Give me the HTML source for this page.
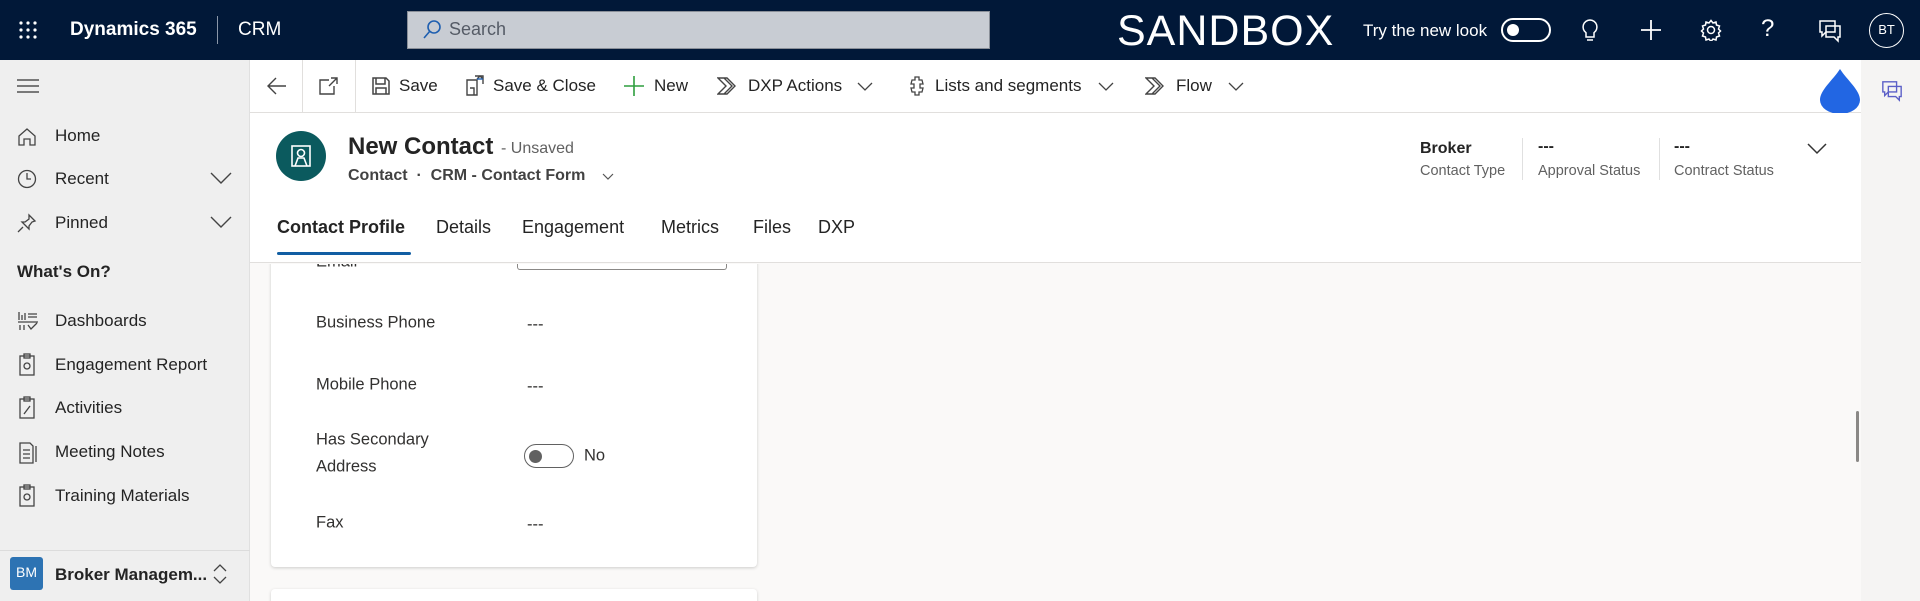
<!DOCTYPE html>
<html><head><meta charset="utf-8"><style>
*{margin:0;padding:0;box-sizing:border-box}
body{width:1920px;height:601px;overflow:hidden;font-family:"Liberation Sans",sans-serif;background:#faf9f8;position:relative;color:#242424}
.a{position:absolute;white-space:nowrap}
.top{position:absolute;left:0;top:0;width:1920px;height:60px;background:#011838;color:#fff}
.side{position:absolute;left:0;top:60px;width:250px;height:541px;background:#efefef;border-right:1px solid #e0e0e0}
.side .it{position:absolute;left:55px;font-size:17px;color:#242424;transform:translateY(-50%)}
.side svg{position:absolute;left:17px}
.cmd{position:absolute;left:250px;top:60px;width:1611px;height:53px;background:#fff;border-bottom:1px solid #e1dfdd}
.cmd .t{position:absolute;top:50%;transform:translateY(-50%);font-size:17px;color:#242424}
.hdr{position:absolute;left:250px;top:113px;width:1611px;height:150px;background:#fff;border-bottom:1px solid #e1dfdd}
.card{position:absolute;left:271px;top:230px;width:486px;height:337px;background:#fff;border-radius:4px;box-shadow:0 1px 3px rgba(0,0,0,.18)}
.lbl{position:absolute;font-size:16.5px;color:#323130;transform:translateY(-50%)}
.val{position:absolute;font-size:16.5px;color:#323130;transform:translateY(-50%)}
</style></head><body>
<div class="top">
 <svg class="a" style="left:19px;top:21px" width="18" height="18" viewBox="0 0 18 18" fill="#fff"><circle cx="2" cy="2" r="1.6"/><circle cx="9" cy="2" r="1.6"/><circle cx="16" cy="2" r="1.6"/><circle cx="2" cy="9" r="1.6"/><circle cx="9" cy="9" r="1.6"/><circle cx="16" cy="9" r="1.6"/><circle cx="2" cy="16" r="1.6"/><circle cx="9" cy="16" r="1.6"/><circle cx="16" cy="16" r="1.6"/></svg>
 <div class="a" style="left:70px;top:19px;font-size:19px;font-weight:bold">Dynamics 365</div>
 <div class="a" style="left:217px;top:16px;width:1px;height:28px;background:#8a96a8"></div>
 <div class="a" style="left:238px;top:19px;font-size:19px">CRM</div>
 <div class="a" style="left:407px;top:11px;width:583px;height:38px;background:#c8ccd3;border:1px solid #8a8f98"></div>
 <svg class="a" style="left:421px;top:19px" width="22" height="22" viewBox="0 0 22 22" fill="none" stroke="#1f5fb0" stroke-width="1.6"><circle cx="13" cy="8" r="6"/><path d="M9 12 3 19"/></svg>
 <div class="a" style="left:449px;top:19px;font-size:18px;color:#555b66">Search</div>
 <div class="a" style="left:1117px;top:7px;font-size:43px;font-weight:300;letter-spacing:1px">SANDBOX</div>
 <div class="a" style="left:1363px;top:21px;font-size:17px">Try the new look</div>
 <div class="a" style="left:1501px;top:18px;width:50px;height:24px;border:2px solid #fff;border-radius:12px"><div style="position:absolute;left:4px;top:4px;width:12px;height:12px;border-radius:50%;background:#fff"></div></div>
 <svg class="a" style="left:1579px;top:18px" width="22" height="26" viewBox="0 0 22 26" fill="none" stroke="#fff" stroke-width="1.5"><path d="M11 2a7 7 0 0 0-4 12.7V19h8v-4.3A7 7 0 0 0 11 2zM8 22h6"/></svg>
 <svg class="a" style="left:1640px;top:19px" width="22" height="22" viewBox="0 0 22 22" stroke="#fff" stroke-width="1.8"><path d="M11 1v20M1 11h20"/></svg>
 <svg class="a" style="left:1700px;top:19px" width="22" height="22" viewBox="0 0 22 22" fill="none" stroke="#fff" stroke-width="1.5"><circle cx="11" cy="11" r="3.5"/><path d="M11 1.5l2 2.5 3-1 .5 3 3 1-1 3 2 2-2 2 1 3-3 1-.5 3-3-1-2 2.5-2-2.5-3 1-.5-3-3-1 1-3-2-2 2-2-1-3 3-1 .5-3 3 1z"/></svg>
 <div class="a" style="left:1761px;top:15px;font-size:24px;font-weight:300">?</div>
 <svg class="a" style="left:1818px;top:19px" width="24" height="24" viewBox="0 0 24 24" fill="none" stroke="#fff" stroke-width="1.5"><path d="M2 2h15v11H8l-4 4v-4H2z"/><path d="M8 7h14v11h-2v4l-4-4H8z"/></svg>
 <div class="a" style="left:1869px;top:13px;width:35px;height:35px;border:1.5px solid #fff;border-radius:50%;font-size:13px;text-align:center;line-height:32px">BT</div>
</div>
<div class="side">
 <svg style="top:19px" width="22" height="14" viewBox="0 0 22 14" stroke="#333" stroke-width="1.3"><path d="M0 1h22M0 7h22M0 13h22"/></svg>
 <svg style="top:67px" width="20" height="20" viewBox="0 0 20 20" fill="none" stroke="#444" stroke-width="1.3"><path d="M2 9 10 2l8 7v9h-5v-6H7v6H2z"/></svg><div class="it" style="top:76px">Home</div>
 <svg style="top:109px" width="20" height="20" viewBox="0 0 20 20" fill="none" stroke="#444" stroke-width="1.3"><circle cx="10" cy="10" r="8.5"/><path d="M10 4v6h4"/></svg><div class="it" style="top:119px">Recent</div>
 <svg class="x" style="left:210px;top:112px" width="22" height="12" viewBox="0 0 22 12" fill="none" stroke="#444" stroke-width="1.4"><path d="M1 1l10 10L21 1"/></svg>
 <svg style="top:153px" width="20" height="20" viewBox="0 0 20 20" fill="none" stroke="#444" stroke-width="1.3"><path d="M12 2l6 6-3 1-3 4 0 3-7-7h3l4-3zM6 14l-5 5"/></svg><div class="it" style="top:163px">Pinned</div>
 <svg style="left:210px;top:156px" width="22" height="12" viewBox="0 0 22 12" fill="none" stroke="#444" stroke-width="1.4"><path d="M1 1l10 10L21 1"/></svg>
 <div class="it" style="left:17px;top:212px;font-weight:bold">What's On?</div>
 <svg style="top:251px" width="22" height="20" viewBox="0 0 22 20" fill="none" stroke="#444" stroke-width="1.3"><path d="M2 1v8M5 4v5M8 2v7M11 3h9M11 6h9M1 11h20M3 14v5M7 14v5M11 14l3 4 6-6"/></svg><div class="it" style="top:261px">Dashboards</div>
 <svg style="top:293px" width="20" height="24" viewBox="0 0 20 24" fill="none" stroke="#444" stroke-width="1.3"><rect x="3" y="3" width="14" height="19"/><rect x="7" y="1" width="6" height="4"/><circle cx="10" cy="13" r="3"/></svg><div class="it" style="top:305px">Engagement Report</div>
 <svg style="top:336px" width="20" height="24" viewBox="0 0 20 24" fill="none" stroke="#444" stroke-width="1.3"><rect x="3" y="3" width="14" height="19"/><rect x="7" y="1" width="6" height="4"/><path d="M7 18l6-8"/></svg><div class="it" style="top:348px">Activities</div>
 <svg style="top:380px" width="22" height="24" viewBox="0 0 22 24" fill="none" stroke="#444" stroke-width="1.3"><path d="M3 3h10l3 3v17H3zM6 10h7M6 14h7M6 18h7M19 6v16"/></svg><div class="it" style="top:392px">Meeting Notes</div>
 <svg style="top:424px" width="20" height="24" viewBox="0 0 20 24" fill="none" stroke="#444" stroke-width="1.3"><rect x="3" y="3" width="14" height="19"/><rect x="7" y="1" width="6" height="4"/><circle cx="10" cy="13" r="3"/></svg><div class="it" style="top:436px">Training Materials</div>
 <div style="position:absolute;left:0;top:490px;width:250px;height:1px;background:#dcdcdc"></div>
 <div style="position:absolute;left:10px;top:497px;width:33px;height:33px;background:#2d73b3;border-radius:3px;color:#fff;font-size:14px;text-align:center;line-height:31px">BM</div>
 <div class="it" style="top:515px;font-weight:bold">Broker Managem...</div>
 <svg style="left:212px;top:503px" width="16" height="22" viewBox="0 0 16 22" fill="none" stroke="#444" stroke-width="1.3"><path d="M2 8l6-6 6 6M2 14l6 6 6-6"/></svg>
</div>
<div class="cmd">
 <div class="a" style="left:52px;top:0;width:1px;height:53px;background:#e1dfdd"></div>
 <div class="a" style="left:105px;top:0;width:1px;height:53px;background:#e1dfdd"></div>
 <svg class="a" style="left:17px;top:17px" width="20" height="18" viewBox="0 0 20 18" fill="none" stroke="#444" stroke-width="1.4"><path d="M19 9H2M9 1 1 9l8 8"/></svg>
 <svg class="a" style="left:69px;top:17px" width="20" height="18" viewBox="0 0 20 18" fill="none" stroke="#444" stroke-width="1.4"><path d="M10 3H1v14h14V9M12 1h6v6M18 1l-8 8"/></svg>
 <svg class="a" style="left:122px;top:17px" width="18" height="18" viewBox="0 0 18 18" fill="none" stroke="#444" stroke-width="1.5"><path d="M1 1h13l3 3v13H1zM4 1v6h9V1M4 17v-6h10v6"/></svg>
 <div class="t" style="left:149px">Save</div>
 <svg class="a" style="left:215px;top:14px" width="20" height="22" viewBox="0 0 20 22" fill="none" stroke="#444" stroke-width="1.4"><path d="M2 6h10v15H2zM5 14h4v7M10 2h8v8M12 5l3-3 3 3" /><path d="M12 5h6" stroke="#1f5fb0"/></svg>
 <div class="t" style="left:243px">Save &amp; Close</div>
 <svg class="a" style="left:374px;top:16px" width="20" height="20" viewBox="0 0 20 20" stroke="#2e9e3e" stroke-width="1.6"><path d="M10 0v20M0 10h20"/></svg>
 <div class="t" style="left:404px">New</div>
 <svg class="a" style="left:467px;top:17px" width="22" height="18" viewBox="0 0 22 18" fill="none" stroke="#444" stroke-width="1.4"><path d="M1 1h9l8 8-8 8H1l8-8zM7 1l8 8-8 8"/></svg>
 <div class="t" style="left:498px">DXP Actions</div>
 <svg class="a" style="left:607px;top:22px" width="16" height="9" viewBox="0 0 16 9" fill="none" stroke="#444" stroke-width="1.3"><path d="M1 1l7 7 7-7"/></svg>
 <svg class="a" style="left:658px;top:16px" width="18" height="20" viewBox="0 0 18 20" fill="none" stroke="#444" stroke-width="1.3"><path d="M7 1h4v3h3l1 4h-3v4h3l-1 4h-3v3H7v-3H4l-1-4h3V8H3l1-4h3z"/></svg>
 <div class="t" style="left:685px">Lists and segments</div>
 <svg class="a" style="left:848px;top:22px" width="16" height="9" viewBox="0 0 16 9" fill="none" stroke="#444" stroke-width="1.3"><path d="M1 1l7 7 7-7"/></svg>
 <svg class="a" style="left:895px;top:17px" width="22" height="18" viewBox="0 0 22 18" fill="none" stroke="#444" stroke-width="1.4"><path d="M1 1h9l8 8-8 8H1l8-8zM7 1l8 8-8 8"/></svg>
 <div class="t" style="left:926px">Flow</div>
 <svg class="a" style="left:978px;top:22px" width="16" height="9" viewBox="0 0 16 9" fill="none" stroke="#444" stroke-width="1.3"><path d="M1 1l7 7 7-7"/></svg>
</div>
<svg class="a" style="left:1819px;top:68px" width="42" height="46" viewBox="0 0 42 46"><path d="M21 1C14 12 1 22 1 32a20 14 0 0 0 40 0C41 22 28 12 21 1z" fill="#2266e3"/></svg>
<div class="a" style="left:1861px;top:60px;width:59px;height:541px;background:#f5f4f3"></div>
<svg class="a" style="left:1881px;top:80px" width="22" height="22" viewBox="0 0 24 24" fill="none" stroke="#5b5fc7" stroke-width="1.5"><path d="M2 2h15v11H8l-4 4v-4H2z"/><path d="M8 7h14v11h-2v4l-4-4H8z"/></svg>
<div class="hdr">
 <div class="a" style="left:26px;top:18px;width:50px;height:50px;border-radius:50%;background:#0b5a5e"></div>
 <svg class="a" style="left:41px;top:32px" width="20" height="22" viewBox="0 0 20 22" fill="none" stroke="#fff" stroke-width="1.6"><rect x="1" y="1" width="18" height="20"/><circle cx="10" cy="8" r="3.5"/><path d="M4 21l3-8h6l3 8"/></svg>
 <div class="a" style="left:98px;top:20px;font-size:24px;font-weight:bold">New Contact</div>
 <div class="a" style="left:251px;top:27px;font-size:16px;color:#616161">- Unsaved</div>
 <div class="a" style="left:98px;top:54px;font-size:16px;font-weight:bold;color:#424242">Contact &nbsp;·&nbsp; CRM - Contact Form</div>
 <svg class="a" style="left:352px;top:60px" width="12" height="8" viewBox="0 0 12 8" fill="none" stroke="#555" stroke-width="1.2"><path d="M1 1l5 5 5-5"/></svg>
 <div class="a" style="left:1170px;top:27px;font-size:16px;font-weight:bold">Broker</div>
 <div class="a" style="left:1170px;top:50px;font-size:14.5px;color:#616161">Contact Type</div>
 <div class="a" style="left:1272px;top:25px;width:1px;height:42px;background:#e0e0e0"></div>
 <div class="a" style="left:1288px;top:25px;font-size:16px;font-weight:bold">---</div>
 <div class="a" style="left:1288px;top:50px;font-size:14.5px;color:#616161">Approval Status</div>
 <div class="a" style="left:1409px;top:25px;width:1px;height:42px;background:#e0e0e0"></div>
 <div class="a" style="left:1424px;top:25px;font-size:16px;font-weight:bold">---</div>
 <div class="a" style="left:1424px;top:50px;font-size:14.5px;color:#616161">Contract Status</div>
 <svg class="a" style="left:1557px;top:30px" width="20" height="12" viewBox="0 0 20 12" fill="none" stroke="#333" stroke-width="1.5"><path d="M1 1l9 9 9-9"/></svg>
 <div class="a" style="left:27px;top:104px;font-size:18px;font-weight:bold;color:#242424">Contact Profile</div>
 <div class="a" style="left:186px;top:104px;font-size:18px">Details</div>
 <div class="a" style="left:272px;top:104px;font-size:18px">Engagement</div>
 <div class="a" style="left:411px;top:104px;font-size:18px">Metrics</div>
 <div class="a" style="left:503px;top:104px;font-size:18px">Files</div>
 <div class="a" style="left:568px;top:104px;font-size:18px">DXP</div>
 <div class="a" style="left:27px;top:139px;width:134px;height:3px;background:#115ea3;border-radius:2px"></div>
</div>
<div style="position:absolute;left:250px;top:264px;width:1611px;height:337px;overflow:hidden">
 <div class="card" style="left:21px;top:-40px;height:343px">
  <div class="lbl" style="left:45px;top:38px">Email</div>
  <div class="a" style="left:246px;top:24px;width:210px;height:22px;border:1px solid #8a8886;border-top:none;border-radius:0 0 3px 3px"></div>
  <div class="lbl" style="left:45px;top:99px">Business Phone</div><div class="val" style="left:256px;top:101px">---</div>
  <div class="lbl" style="left:45px;top:161px">Mobile Phone</div><div class="val" style="left:256px;top:163px">---</div>
  <div class="lbl" style="left:45px;top:216px">Has Secondary</div>
  <div class="lbl" style="left:45px;top:243px">Address</div>
  <div class="a" style="left:253px;top:220px;width:50px;height:24px;border:1.3px solid #616161;border-radius:12px"><div style="position:absolute;left:4px;top:5px;width:13px;height:13px;border-radius:50%;background:#616161"></div></div>
  <div class="val" style="left:313px;top:232px">No</div>
  <div class="lbl" style="left:45px;top:299px">Fax</div><div class="val" style="left:256px;top:301px">---</div>
 </div>
 <div class="card" style="left:21px;top:325px;height:40px"></div>
 <div class="a" style="left:1606px;top:147px;width:3px;height:51px;background:#8a8886;border-radius:2px"></div>
</div>
</body></html>
